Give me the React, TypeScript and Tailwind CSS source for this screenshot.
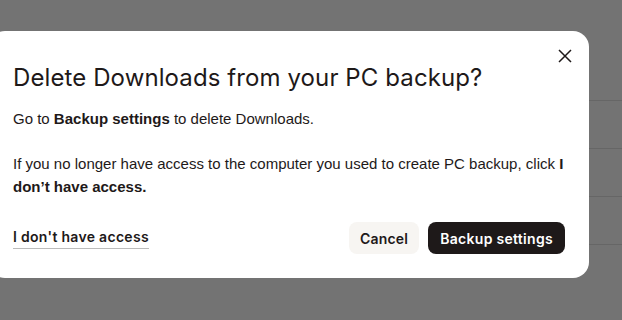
import React from "react";

export default function App() {
  return (
    <div className="relative w-[622px] h-[320px] overflow-hidden bg-[#737373]">
      <div className="absolute right-0 top-[100px] w-[60px] flex flex-col">
        <div className="h-[48px] border-t border-[#666666]" />
        <div className="h-[48px] border-t border-[#666666]" />
        <div className="h-[48px] border-t border-[#666666]" />
        <div className="h-[48px] border-t border-[#666666]" />
      </div>
      <div className="absolute left-[-11px] top-[31px] w-[600px] h-[247px] bg-white rounded-[16px] px-[24px] pt-[31px] text-[#1e1919]">
        <button className="absolute right-[16px] top-[17px] w-[16px] h-[16px] flex items-center justify-center">
          <svg width="14" height="14" viewBox="0 0 14 14" fill="none" stroke="#1e1919" strokeWidth="1.5">
            <path d="M1 1 L13 13 M13 1 L1 13" />
          </svg>
        </button>
        <h2 className="text-[24px] leading-[32px] font-normal tracking-[0.1px]" style={{ fontFamily: "Inter, 'Noto Sans', sans-serif" }}>
          Delete Downloads from your PC backup?
        </h2>
        <div className="mt-[13px] text-[15px] leading-[23px]" style={{ fontFamily: "'Liberation Sans', Arial, sans-serif" }}>
          <p>
            Go to <b className="font-bold">Backup settings</b> to delete Downloads.
          </p>
          <p className="mt-[22px]">
            If you no longer have access to the computer you used to create PC backup, click <b className="font-bold">I don’t have access.</b>
          </p>
        </div>
        <div className="mt-[24px] flex items-center justify-between" style={{ fontFamily: "Inter, sans-serif" }}>
          <span className="text-[14px] font-semibold leading-[20px] tracking-[0.3px] border-b border-[#bbbbbb] pb-[1px]">I don't have access</span>
          <div className="flex items-center gap-[9px]">
            <button className="h-[32px] px-[11px] rounded-[8px] bg-[#f7f5f2] text-[14px] font-semibold tracking-[0.2px]">Cancel</button>
            <button className="h-[32px] px-[12px] rounded-[8px] bg-[#1e1919] text-white text-[14px] font-semibold tracking-[0.3px]">Backup settings</button>
          </div>
        </div>
      </div>
    </div>
  );
}
